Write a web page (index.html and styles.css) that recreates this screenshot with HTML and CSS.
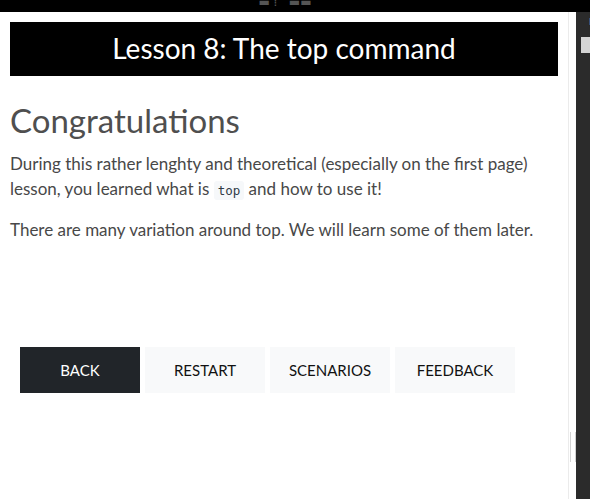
FILE: index.html
```html
<!DOCTYPE html>
<html>
<head>
<meta charset="utf-8">
<link rel="stylesheet" href="styles.css">
</head>
<body>
<div class="topbar"><span class="topbar-text">▬ ⁞ &nbsp; ▬▬</span></div>
<div class="frame">
  <main class="main">
    <div class="lesson-title">Lesson 8: The top command</div>
    <h1 class="heading">Congratulations</h1>
    <p class="para">During this rather lenghty and theoretical (especially on the first page) lesson, you learned what is <code class="code">top</code> and how to use it!</p>
    <p class="para">There are many variation around top. We will learn some of them later.</p>
    <div class="buttons">
      <button class="btn btn-dark">BACK</button>
      <button class="btn">RESTART</button>
      <button class="btn">SCENARIOS</button>
      <button class="btn">FEEDBACK</button>
    </div>
  </main>
  <div class="gutter"><div class="handle"></div></div>
  <aside class="side">
    <div class="side-glyph">E</div>
    <div class="side-box"></div>
  </aside>
</div>
</body>
</html>
```
FILE: styles.css
```css
html, body {
  margin: 0;
  padding: 0;
  background: #fff;
  height: 499px;
  overflow: hidden;
}
.topbar {
  height: 12px;
  background: #000;
  display: flex;
  justify-content: center;
  overflow: hidden;
}
.topbar-text {
  color: #555;
  font: 12px "DejaVu Sans", sans-serif;
  line-height: 4px;
  margin-left: -20px;
}
.frame {
  display: flex;
  height: 487px;
}
.main {
  flex: 0 0 548px;
  padding: 10px 10px 0 10px;
  border-right: 1px solid #ebebeb;
  font-family: "Lato", sans-serif;
  color: #484848;
}
.lesson-title {
  background: #000;
  color: #fff;
  height: 54px;
  display: flex;
  align-items: center;
  justify-content: center;
  font-size: 28px;
  padding-bottom: 2px;
  box-sizing: border-box;
}
.heading {
  margin: 24px 0 0 0;
  font-weight: 400;
  font-size: 33px;
  line-height: 40px;
  color: #4f4f4f;
}
.para {
  margin: 11px 0 0 0;
  font-size: 17px;
  line-height: 25px;
}
.para + .para {
  margin-top: 14px;
}
.code {
  font-family: "DejaVu Sans Mono", monospace;
  font-size: 12.5px;
  color: #2f3b46;
  background: #f6f8fa;
  border-radius: 3px;
  padding: 2px 4px;
}
.buttons {
  display: flex;
  gap: 5px;
  margin: 105px 0 0 10px;
}
.btn {
  width: 120px;
  height: 46px;
  border: none;
  border-radius: 0;
  background: #f8f9fa;
  color: #111;
  font-family: "Lato", sans-serif;
  font-size: 15px;
  padding: 0;
}
.btn-dark {
  background: #212529;
  color: #fff;
}
.gutter {
  flex: 0 0 6px;
  display: flex;
  flex-direction: column;
  justify-content: flex-end;
  padding-bottom: 37px;
}
.handle {
  height: 30px;
  width: 4px;
  margin-left: 1px;
  border-left: 1px solid #d2d2d2;
  border-right: 1px solid #d2d2d2;
}
.side {
  flex: 1;
  background: #2b2b2b;
  padding: 5px 0 0 5px;
}
.side-glyph {
  color: #e0d0c0;
  font: 9px "DejaVu Sans", sans-serif;
  margin-left: 8px;
  height: 12px;
}
.side-box {
  margin-top: 8px;
  height: 16px;
  background: #d4d4d4;
}
```
